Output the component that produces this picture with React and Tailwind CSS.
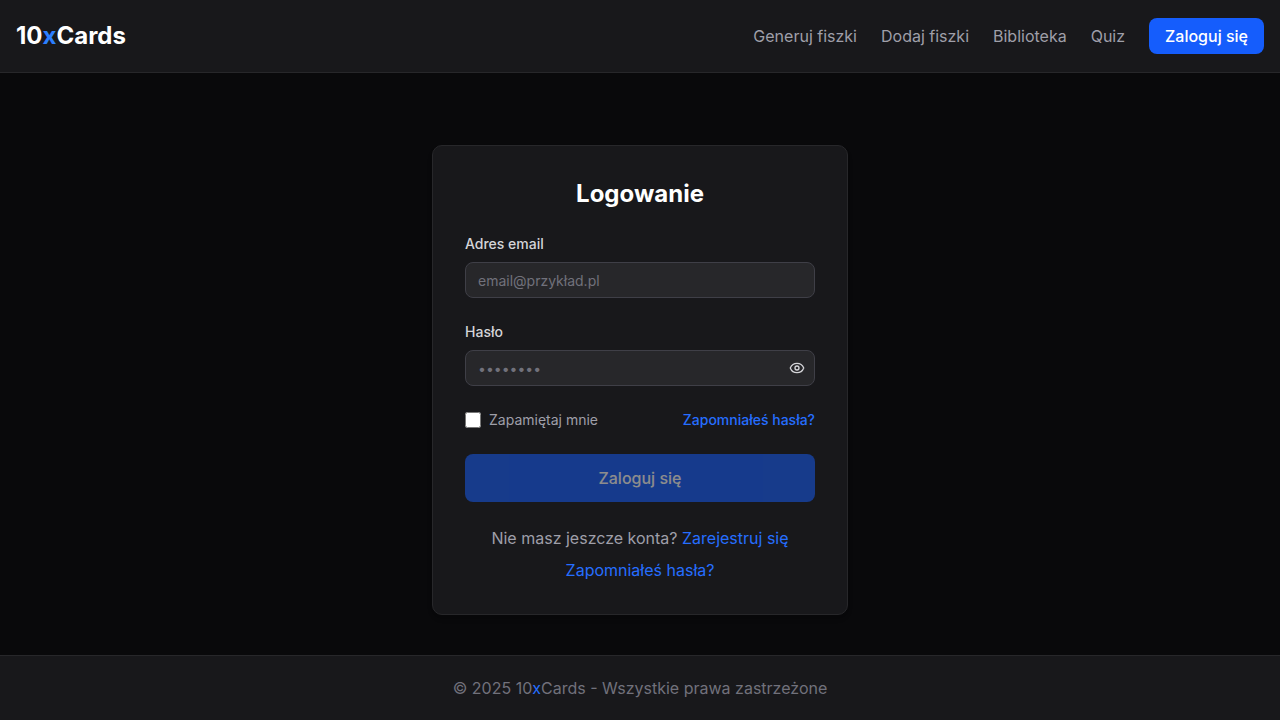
import { useState } from "react";
import { Eye, EyeOff } from "lucide-react";

const navLinks = ["Generuj fiszki", "Dodaj fiszki", "Biblioteka", "Quiz"];

const inputClass =
  "block h-9 w-full rounded-lg border border-zinc-700 bg-zinc-800 px-3 py-1 text-sm text-white placeholder:text-zinc-500 focus:border-blue-500 focus:outline-none";

function Header() {
  return (
    <header className="border-b border-zinc-800 bg-zinc-900">
      <div className="flex items-center justify-between px-4 py-4">
        <a href="#" className="text-2xl leading-10 font-bold text-white">
          10<span className="text-blue-500">x</span>Cards
        </a>
        <nav className="flex items-center gap-6">
          {navLinks.map((label) => (
            <a key={label} href="#" className="text-zinc-400 hover:text-white">
              {label}
            </a>
          ))}
          <a href="#" className="rounded-lg bg-blue-600 px-4 py-1.5 font-medium text-white">
            Zaloguj się
          </a>
        </nav>
      </div>
    </header>
  );
}

function LoginForm() {
  const [email, setEmail] = useState("");
  const [password, setPassword] = useState("");
  const [visible, setVisible] = useState(false);
  const VisibilityIcon = visible ? EyeOff : Eye;

  return (
    <form className="space-y-6" onSubmit={(event) => event.preventDefault()}>
      <div className="space-y-2">
        <label htmlFor="email" className="block text-sm font-medium text-zinc-300">
          Adres email
        </label>
        <input
          id="email"
          type="email"
          placeholder="email@przykład.pl"
          value={email}
          onChange={(event) => setEmail(event.target.value)}
          className={inputClass}
        />
      </div>
      <div className="space-y-2">
        <label htmlFor="password" className="block text-sm font-medium text-zinc-300">
          Hasło
        </label>
        <div className="relative">
          <input
            id="password"
            type={visible ? "text" : "password"}
            placeholder="••••••••"
            value={password}
            onChange={(event) => setPassword(event.target.value)}
            className={inputClass}
          />
          <button
            type="button"
            aria-label={visible ? "Ukryj hasło" : "Pokaż hasło"}
            onClick={() => setVisible(!visible)}
            className="absolute inset-y-0 right-0 flex items-center px-2.5 text-zinc-300"
          >
            <VisibilityIcon className="size-4" />
          </button>
        </div>
      </div>
      <div className="flex items-center justify-between text-sm">
        <label className="flex items-center gap-2 text-zinc-400">
          <input type="checkbox" className="size-4" />
          Zapamiętaj mnie
        </label>
        <a href="#" className="font-medium text-[#266eff]">
          Zapomniałeś hasła?
        </a>
      </div>
      <button
        type="submit"
        disabled={!email || !password}
        className="h-12 w-full rounded-lg bg-blue-600 font-medium text-white disabled:opacity-50"
      >
        Zaloguj się
      </button>
    </form>
  );
}

export default function App() {
  return (
    <div className="flex min-h-screen flex-col bg-zinc-950 font-['Inter',sans-serif] text-base">
      <Header />
      <main className="flex grow items-center justify-center px-4 pt-8">
        <section className="w-full max-w-[416px] rounded-[10px] border border-zinc-800 bg-zinc-900 p-8 shadow-md">
          <h1 className="mb-6 text-center text-2xl font-bold text-white">Logowanie</h1>
          <LoginForm />
          <div className="mt-6 space-y-2 text-center text-zinc-400">
            <p>
              Nie masz jeszcze konta?{" "}
              <a href="#" className="text-[#266eff]">
                Zarejestruj się
              </a>
            </p>
            <p>
              <a href="#" className="text-[#266eff]">
                Zapomniałeś hasła?
              </a>
            </p>
          </div>
        </section>
      </main>
      <footer className="border-t border-zinc-800 bg-zinc-900 px-4 py-5 text-center text-zinc-500">
        © 2025 10<span className="text-[#266eff]">x</span>Cards - Wszystkie prawa zastrzeżone
      </footer>
    </div>
  );
}
